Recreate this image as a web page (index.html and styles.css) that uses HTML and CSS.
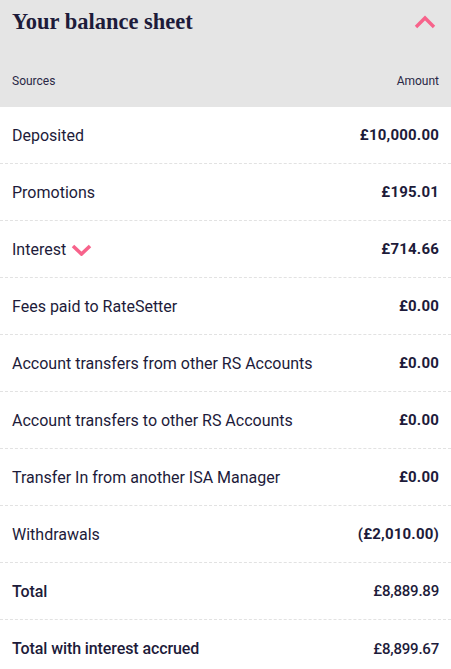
FILE: index.html
```html
<!DOCTYPE html>
<html>
<head>
<meta charset="utf-8">
<link rel="stylesheet" href="styles.css">
</head>
<body>
<section class="sheet">
  <header class="head">
    <div class="title-row">
      <h1 class="title">Your balance sheet</h1>
      <svg class="chev-up" width="22" height="14" viewBox="0 0 22 14"><path d="M2 12 L11 3 L20 12" fill="none" stroke="#f7638b" stroke-width="3.4"/></svg>
    </div>
    <div class="cols"><span>Sources</span><span>Amount</span></div>
  </header>
  <div class="rows">
    <div class="row"><span>Deposited</span><span class="amt">£10,000.00</span></div>
    <div class="row"><span>Promotions</span><span class="amt">£195.01</span></div>
    <div class="row"><span class="lbl">Interest <svg class="chev-down" width="21" height="12" viewBox="0 0 21 12"><path d="M2 2 L10.5 10 L19 2" fill="none" stroke="#f7638b" stroke-width="3.6"/></svg></span><span class="amt">£714.66</span></div>
    <div class="row"><span>Fees paid to RateSetter</span><span class="amt">£0.00</span></div>
    <div class="row"><span>Account transfers from other RS Accounts</span><span class="amt">£0.00</span></div>
    <div class="row"><span>Account transfers to other RS Accounts</span><span class="amt">£0.00</span></div>
    <div class="row"><span>Transfer In from another ISA Manager</span><span class="amt">£0.00</span></div>
    <div class="row"><span>Withdrawals</span><span class="amt">(£2,010.00)</span></div>
    <div class="row total"><span>Total</span><span class="amt">£8,889.89</span></div>
    <div class="row total"><span>Total with interest accrued</span><span class="amt">£8,899.67</span></div>
  </div>
</section>
</body>
</html>
```
FILE: styles.css
```css
html, body { margin: 0; padding: 0; background: #fff; }
body { font-family: Roboto, "Liberation Sans", sans-serif; color: #1d1b3a; }
.sheet { width: 451px; }
.head { background: #e5e5e5; height: 107px; padding: 0 12px; box-sizing: border-box; display: flex; flex-direction: column; }
.title-row { display: flex; justify-content: space-between; align-items: flex-start; padding-top: 6px; }
.title { margin: 0; font-family: "Liberation Serif", "DejaVu Serif", serif; font-weight: bold; font-size: 22.5px; line-height: 31px; color: #1d1b3a; }
.chev-up { margin-top: 9px; margin-right: 3px; }
.cols { display: flex; justify-content: space-between; font-size: 12px; margin-top: 37px; color: #2a2845; }
.rows { display: flex; flex-direction: column; }
.row { height: 57px; box-sizing: border-box; display: flex; justify-content: space-between; align-items: center; padding: 0 12px; font-size: 16px; border-bottom: 1px dashed #e2e2e2; }
.row:last-child { border-bottom: none; }
.amt { font-weight: bold; font-size: 15px; letter-spacing: 0.2px; }
.lbl { display: inline-flex; align-items: center; gap: 5px; }
.chev-down { margin-top: 1px; }
.total { font-weight: 500; letter-spacing: -0.1px; }
.total .amt { font-weight: 500; letter-spacing: -0.2px; }
```
